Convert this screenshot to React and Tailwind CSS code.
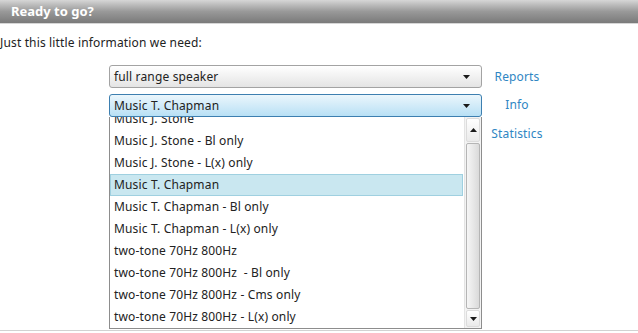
import React from 'react';

const items = [
  'Music J. Stone',
  'Music J. Stone - Bl only',
  'Music J. Stone - L(x) only',
  'Music T. Chapman',
  'Music T. Chapman - Bl only',
  'Music T. Chapman - L(x) only',
  'two-tone 70Hz 800Hz',
  'two-tone 70Hz 800Hz  - Bl only',
  'two-tone 70Hz 800Hz - Cms only',
  'two-tone 70Hz 800Hz - L(x) only',
];

function Arrow({ up }) {
  return (
    <svg width="7" height="4" viewBox="0 0 7 4" className="block">
      <path d={up ? 'M0 4 L3.5 0 L7 4 Z' : 'M0 0 L7 0 L3.5 4 Z'} fill="#1a1a1a" />
    </svg>
  );
}

export default function App() {
  return (
    <div
      className="w-[638px] h-[333px] bg-white text-[12px] tracking-[0.15px] text-[#222] overflow-hidden flex flex-col"
      style={{ fontFamily: '"Noto Sans", "Open Sans", sans-serif' }}
    >
      {/* header bar */}
      <div className="h-[24px] shrink-0 bg-gradient-to-b from-[#d6d6d6] via-[#999999] to-[#7a7a7a] border-b border-[#d6d6d6] flex items-center pl-[11px]">
        <span className="text-white font-bold text-[13px] tracking-normal leading-none">Ready to go?</span>
      </div>

      <p className="mt-[11px] leading-[16px] whitespace-pre">Just this little information we need:</p>

      <div className="flex mt-[14px] flex-1">
        <div className="ml-[109px] w-[373px] flex flex-col">
          <div className="h-[23px] rounded-[3px] border border-[#a3a3a3] bg-gradient-to-b from-white to-[#e4e4e4] flex items-center justify-between pl-[4px] pr-[11px]">
            <span>full range speaker</span>
            <Arrow />
          </div>
          <div className="mt-[6px] h-[23px] rounded-[3px] border border-[#3d7fb0] bg-gradient-to-b from-[#ebf6fc] to-[#b8e0f5] flex items-center justify-between pl-[4px] pr-[11px]">
            <span>Music T. Chapman</span>
            <Arrow />
          </div>
          {/* open list */}
          <div className="h-[212px] border border-[#8d8d8d] border-t-0 bg-white flex overflow-hidden">
            <div className="flex-1 overflow-hidden">
              <div className="-mt-[9px] flex flex-col">
                {items.map((it) => (
                  <div
                    key={it}
                    className={
                      it === 'Music T. Chapman'
                        ? 'h-[22px] mr-[1px] bg-[#c9e7f0] border border-[#9fd0e0] flex items-center pl-[3px] whitespace-pre'
                        : 'h-[22px] flex items-center pl-[4px] whitespace-pre'
                    }
                  >
                    {it}
                  </div>
                ))}
              </div>
            </div>
            <div className="w-[17px] shrink-0 flex flex-col bg-[#f3f3f3] border-l border-[#e4e4e4] pt-[1px]">
              <div className="h-[24px] mx-[1px] flex items-center justify-center border border-[#dcdcdc] bg-gradient-to-b from-white to-[#eaeaea] rounded-[2px]">
                <Arrow up />
              </div>
              <div className="flex-1 mx-[1px] my-[1px] border border-[#b5b5b5] rounded-[2px] bg-gradient-to-r from-[#f6f6f6] via-[#e8e8e8] to-[#dadada]" />
              <div className="h-[17px] mx-[1px] mb-[1px] flex items-center justify-center border border-[#dcdcdc] bg-gradient-to-b from-white to-[#eaeaea] rounded-[2px]">
                <Arrow />
              </div>
            </div>
          </div>
        </div>
        <div className="w-[70px] flex flex-col items-center text-[#2f86c3]">
          <a className="mt-[4px] leading-[16px] cursor-pointer">Reports</a>
          <a className="mt-[12px] leading-[16px] cursor-pointer">Info</a>
          <a className="mt-[13px] leading-[16px] cursor-pointer">Statistics</a>
        </div>
      </div>
      <div className="h-[3px] border-t border-[#d2d2d2] shrink-0" />
    </div>
  );
}
